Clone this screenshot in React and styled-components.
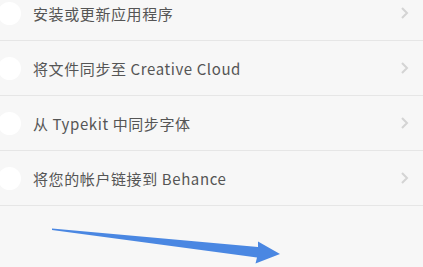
import styled, { createGlobalStyle } from "styled-components";

const GlobalStyle = createGlobalStyle`
  html, body {
    margin: 0;
    padding: 0;
    background: #f7f7f7;
  }
  body {
    font-family: "Noto Sans CJK SC", "Noto Sans", sans-serif;
    overflow: hidden;
  }
`;

const Page = styled.div`
  position: relative;
  width: 423px;
  height: 267px;
  overflow: hidden;
  background: #f7f7f7;
`;

const List = styled.ul`
  list-style: none;
  margin: -14px 0 0 0;
  padding: 0;
`;

const Row = styled.li`
  display: flex;
  align-items: center;
  height: 54px;
  border-bottom: 1px solid #e6e6e6;
  padding-right: 14px;
  cursor: pointer;
`;

const Radio = styled.span`
  flex: none;
  width: 23px;
  height: 23px;
  margin-left: -2px;
  border-radius: 50%;
  background: #ffffff;
`;

const Label = styled.span`
  flex: 1;
  margin-left: 12px;
  font-size: 15px;
  letter-spacing: 0.6px;
  color: #555555;
  white-space: nowrap;
`;

const Chevron = styled.svg`
  flex: none;
  width: 9px;
  height: 12px;
`;

const Arrow = styled.svg`
  position: absolute;
  left: 0;
  top: 0;
  pointer-events: none;
`;

const items = [
  "安装或更新应用程序",
  "将文件同步至 Creative Cloud",
  "从 Typekit 中同步字体",
  "将您的帐户链接到 Behance",
];

function App() {
  return (
    <Page>
      <GlobalStyle />
      <List>
        {items.map((text) => (
          <Row key={text}>
            <Radio />
            <Label>{text}</Label>
            <Chevron viewBox="0 0 9 12">
              <path d="M2 1 L7 6 L2 11" fill="none" stroke="#d4d4d4" strokeWidth="2" />
            </Chevron>
          </Row>
        ))}
      </List>
      <Arrow width="423" height="267" viewBox="0 0 423 267">
        <polygon
          points="52,228.5 258,247 258,241.5 280,254 255.5,263.5 257,257.5 52,230"
          fill="#4a87e2"
        />
      </Arrow>
    </Page>
  );
}

export default App;
